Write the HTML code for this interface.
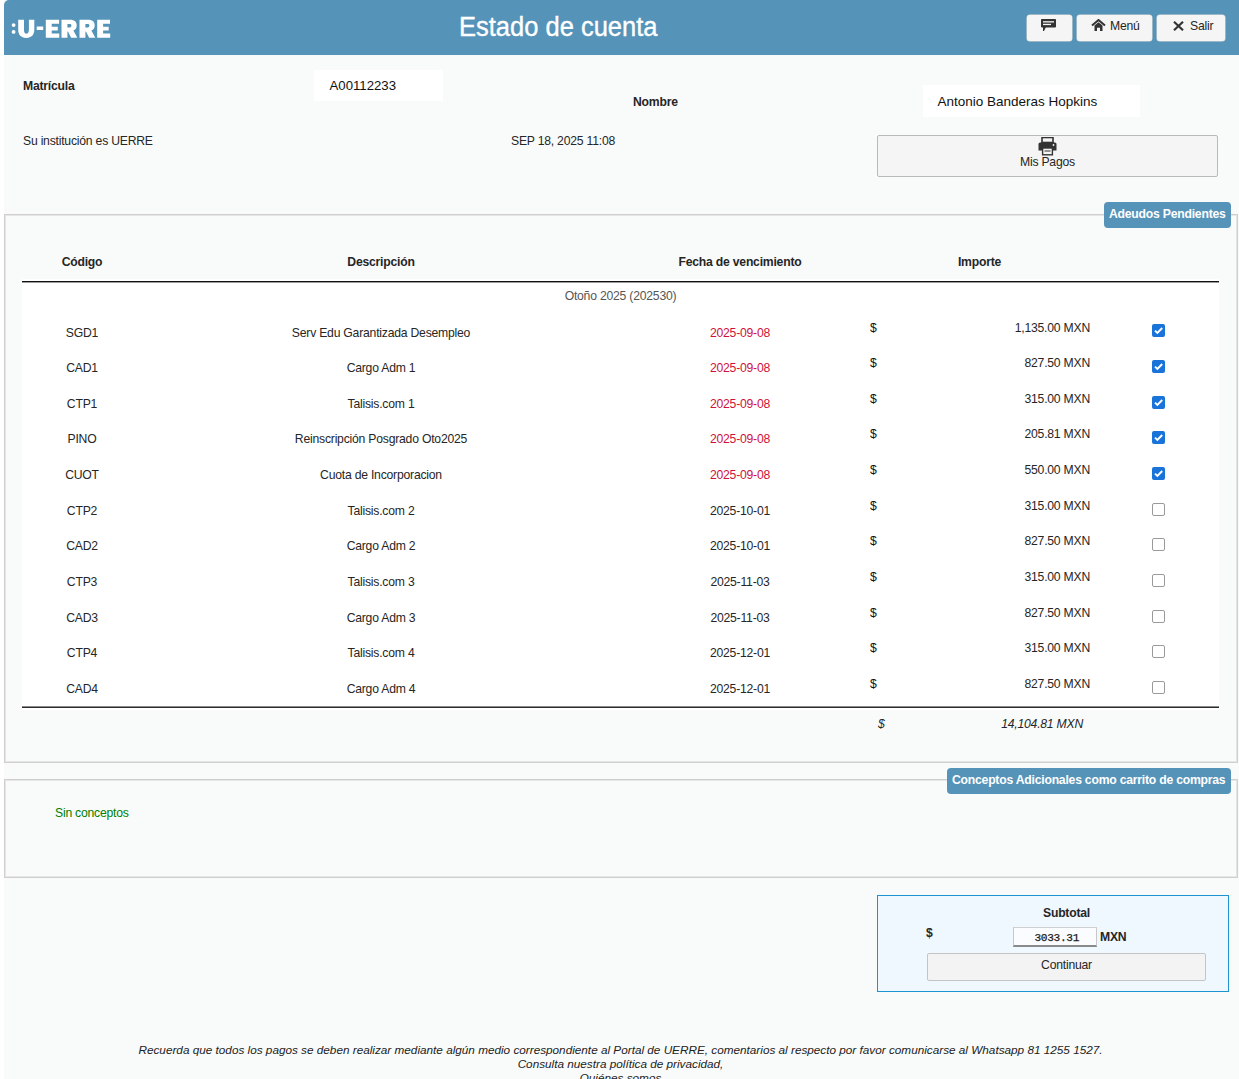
<!DOCTYPE html>
<html lang="es">
<head>
<meta charset="utf-8">
<title>Estado de cuenta</title>
<style>
html,body{margin:0;padding:0;background:#fff;}
body{width:1239px;height:1079px;overflow:hidden;position:relative;font-family:"Liberation Sans",sans-serif;color:#262626;font-size:12px;}
#page{position:absolute;left:4px;top:0;width:1235px;height:1079px;background:#f9fbfb;}
.a{position:absolute;white-space:nowrap;line-height:12px;font-size:12.2px;letter-spacing:-0.22px;}
.b{font-weight:bold;}
.c{text-align:center;}
.r{text-align:right;}
#hdr{position:absolute;left:4px;top:0;width:1235px;height:55px;background:#5593b9;border-top-left-radius:5px;}
.hbtn{position:absolute;top:15px;height:26px;background:#f5f5f5;border-radius:3px;box-shadow:0 0 0 0.5px #e4dcd8;}
.fs{position:absolute;left:4px;width:1230px;border:1px solid #cfcfcf;padding:1px;box-shadow:inset 0 0 0 1px #e6e6e6;}
.lg{position:absolute;height:26px;background:#5593b9;border-radius:4px;color:#fff;font-weight:bold;}
.cb{position:absolute;width:13px;height:13px;box-sizing:border-box;border-radius:2px;}
.cb.on{background:#1a73d9;}
.cb.off{border:1px solid #9a9a9a;background:#fff;}
.red{color:#d0103a;}
</style>
</head>
<body>
<div id="page"></div>
<div id="hdr"></div>
<!-- logo -->
<svg style="position:absolute;left:0;top:0" width="130" height="54">
  <circle cx="13.6" cy="25.1" r="1.9" fill="#fff"/>
  <circle cx="13.6" cy="31.9" r="1.9" fill="#fff"/>
  <path fill="#fff" fill-rule="evenodd" d="M18.2,19.7 H24 V29.8 C24,32.3 24.8,33.7 26.3,33.7 C27.8,33.7 28.9,32.3 28.9,29.8 V19.7 H34.3 V29.6 C34.3,35 31.6,37.9 26.2,37.9 C20.9,37.9 18.2,35 18.2,29.6 Z M36.7,26.6 H43.2 V30 H36.7 Z M45.8,19.7 H59.099999999999994 V23.8 H51.699999999999996 V26.7 H57.8 V30.6 H51.699999999999996 V33.6 H59.3 V37.8 H45.8 Z M61.5,19.7 H70.1 C74.9,19.7 76.7,22.1 76.7,25.4 C76.7,28.0 75.5,29.7 73.4,30.6 L77.3,37.8 H71.1 L68.0,31.4 H67.4 V37.8 H61.5 Z M67.4,23.9 V27.4 H69.7 C71.0,27.4 71.4,26.7 71.4,25.6 C71.4,24.5 70.9,23.9 69.7,23.9 Z M79.5,19.7 H88.1 C92.9,19.7 94.7,22.1 94.7,25.4 C94.7,28.0 93.5,29.7 91.4,30.6 L95.3,37.8 H89.1 L86.0,31.4 H85.4 V37.8 H79.5 Z M85.4,23.9 V27.4 H87.7 C89.0,27.4 89.4,26.7 89.4,25.6 C89.4,24.5 88.9,23.9 87.7,23.9 Z M97.2,19.7 H110.0 V23.8 H103.10000000000001 V26.7 H108.7 V30.6 H103.10000000000001 V33.6 H110.2 V37.8 H97.2 Z"/>
</svg>
<div class="a" style="left:459px;top:14.4px;font-size:25.5px;letter-spacing:0;line-height:26px;color:#fff;transform:scale(1,1.09);transform-origin:0 22px;-webkit-text-stroke:0.35px #fff;">Estado de cuenta</div>

<div class="hbtn" style="left:1027px;width:45px;">
  <svg style="position:absolute;left:14px;top:4px" width="16" height="13" viewBox="0 0 16 13">
    <path d="M0.5 0.5 H14.5 V8 H4.5 L2.5 12 L2.5 8 H0.5 Z" fill="#333" stroke="#333" stroke-width="1" stroke-linejoin="round"/>
    <rect x="2" y="2.2" width="11" height="1.3" fill="#f5f5f5"/>
    <rect x="2" y="4.8" width="8" height="1.3" fill="#f5f5f5"/>
  </svg>
</div>
<div class="hbtn" style="left:1077px;width:75px;">
  <svg style="position:absolute;left:14px;top:4px" width="16" height="13" viewBox="0 0 16 13">
    <path d="M1 6.5 L7.5 1 L14 6.5" fill="none" stroke="#333" stroke-width="2"/>
    <path d="M3.5 6.5 L7.5 3.3 L11.5 6.5 V12 H9 V8.7 H6 V12 H3.5 Z" fill="#333"/>
  </svg>
  <div class="a" style="left:33px;top:5px;">Menú</div>
</div>
<div class="hbtn" style="left:1157px;width:68px;">
  <svg style="position:absolute;left:16px;top:5.5px" width="11" height="10" viewBox="0 0 11 10">
    <path d="M1 0.8 L10 9.2 M10 0.8 L1 9.2" stroke="#333" stroke-width="2.2"/>
  </svg>
  <div class="a" style="left:33px;top:5px;">Salir</div>
</div>

<!-- info -->
<div class="a b" style="left:23px;top:80px;">Matrícula</div>
<div style="position:absolute;left:314px;top:70px;width:129px;height:31px;background:#fff;"></div>
<div class="a" style="left:329.5px;top:79px;font-size:13.2px;letter-spacing:0;line-height:13px;color:#111;">A00112233</div>
<div class="a b" style="left:633px;top:96px;">Nombre</div>
<div style="position:absolute;left:923px;top:85px;width:217px;height:32px;background:#fff;"></div>
<div class="a" style="left:937.5px;top:95px;font-size:13.5px;letter-spacing:0;line-height:13px;color:#111;">Antonio Banderas Hopkins</div>
<div class="a" style="left:23px;top:135px;">Su institución es UERRE</div>
<div class="a" style="left:511px;top:135px;">SEP 18, 2025 11:08</div>
<div style="position:absolute;left:877px;top:135px;width:339px;height:40px;background:#f5f5f5;border:1px solid #b9b9b9;border-radius:2px;">
  <svg style="position:absolute;left:160px;top:1px" width="19" height="19" viewBox="0 0 19 19">
    <rect x="4" y="0.5" width="11" height="5" fill="none" stroke="#333" stroke-width="1.6"/>
    <path d="M0.5 7 Q0.5 5.5 2 5.5 H17 Q18.5 5.5 18.5 7 V13.5 H15 V11 H4 V13.5 H0.5 Z" fill="#333"/>
    <rect x="4.6" y="11" width="9.8" height="6.8" fill="none" stroke="#333" stroke-width="1.4"/>
    <rect x="6.5" y="13.5" width="6" height="1" fill="#333"/>
    <circle cx="15.5" cy="8" r="0.9" fill="#f5f5f5"/>
  </svg>
  <div class="a" style="left:142px;top:20px;">Mis Pagos</div>
</div>

<!-- fieldset 1 -->
<div class="fs" style="top:214px;height:545px;"></div>
<div class="lg" style="left:1104px;top:202px;width:127px;"><div class="a" style="left:5px;top:6px;">Adeudos Pendientes</div></div>

<!-- table -->
<div style="position:absolute;left:22px;top:279px;width:1197px;height:431px;background:#fff;"></div>
<div style="position:absolute;left:22px;top:281px;width:1197px;height:1px;background:#111;"></div>
<div style="position:absolute;left:22px;top:282px;width:1197px;height:1px;background:#9a9a9a;"></div>
<div style="position:absolute;left:22px;top:706px;width:1197px;height:1px;background:#8a8a8a;"></div>
<div style="position:absolute;left:22px;top:707px;width:1197px;height:1px;background:#2a2d2d;"></div>
<div id="thead">
  <div class="a b c" style="left:22px;width:120px;top:256px;">Código</div>
  <div class="a b c" style="left:142px;width:478px;top:256px;">Descripción</div>
  <div class="a b c" style="left:620px;width:240px;top:256px;">Fecha de vencimiento</div>
  <div class="a b c" style="left:860px;width:239px;top:256px;">Importe</div>
</div>
<div class="a c" style="left:22px;width:1197px;top:290px;color:#555;">Otoño 2025 (202530)</div>
<!--ROWS-->
<div class="a c" style="left:22px;width:120px;top:326.50px;">SGD1</div>
<div class="a c" style="left:142px;width:478px;top:326.50px;">Serv Edu Garantizada Desempleo</div>
<div class="a c red" style="left:620px;width:240px;top:326.50px;">2025-09-08</div>
<div class="a" style="left:870px;top:321.50px;color:#111;">$</div>
<div class="a r" style="left:900px;width:190px;top:321.50px;">1,135.00 MXN</div>
<div class="cb on" style="left:1152.3px;top:324.40px;"><svg width="13" height="13" viewBox="0 0 13 13" style="position:absolute;left:0;top:0"><path d="M3 6.6 L5.4 9 L10.2 4" fill="none" stroke="#fff" stroke-width="1.9"/></svg></div>
<div class="a c" style="left:22px;width:120px;top:362.15px;">CAD1</div>
<div class="a c" style="left:142px;width:478px;top:362.15px;">Cargo Adm 1</div>
<div class="a c red" style="left:620px;width:240px;top:362.15px;">2025-09-08</div>
<div class="a" style="left:870px;top:357.15px;color:#111;">$</div>
<div class="a r" style="left:900px;width:190px;top:357.15px;">827.50 MXN</div>
<div class="cb on" style="left:1152.3px;top:360.05px;"><svg width="13" height="13" viewBox="0 0 13 13" style="position:absolute;left:0;top:0"><path d="M3 6.6 L5.4 9 L10.2 4" fill="none" stroke="#fff" stroke-width="1.9"/></svg></div>
<div class="a c" style="left:22px;width:120px;top:397.80px;">CTP1</div>
<div class="a c" style="left:142px;width:478px;top:397.80px;">Talisis.com 1</div>
<div class="a c red" style="left:620px;width:240px;top:397.80px;">2025-09-08</div>
<div class="a" style="left:870px;top:392.80px;color:#111;">$</div>
<div class="a r" style="left:900px;width:190px;top:392.80px;">315.00 MXN</div>
<div class="cb on" style="left:1152.3px;top:395.70px;"><svg width="13" height="13" viewBox="0 0 13 13" style="position:absolute;left:0;top:0"><path d="M3 6.6 L5.4 9 L10.2 4" fill="none" stroke="#fff" stroke-width="1.9"/></svg></div>
<div class="a c" style="left:22px;width:120px;top:433.45px;">PINO</div>
<div class="a c" style="left:142px;width:478px;top:433.45px;">Reinscripción Posgrado Oto2025</div>
<div class="a c red" style="left:620px;width:240px;top:433.45px;">2025-09-08</div>
<div class="a" style="left:870px;top:428.45px;color:#111;">$</div>
<div class="a r" style="left:900px;width:190px;top:428.45px;">205.81 MXN</div>
<div class="cb on" style="left:1152.3px;top:431.35px;"><svg width="13" height="13" viewBox="0 0 13 13" style="position:absolute;left:0;top:0"><path d="M3 6.6 L5.4 9 L10.2 4" fill="none" stroke="#fff" stroke-width="1.9"/></svg></div>
<div class="a c" style="left:22px;width:120px;top:469.10px;">CUOT</div>
<div class="a c" style="left:142px;width:478px;top:469.10px;">Cuota de Incorporacion</div>
<div class="a c red" style="left:620px;width:240px;top:469.10px;">2025-09-08</div>
<div class="a" style="left:870px;top:464.10px;color:#111;">$</div>
<div class="a r" style="left:900px;width:190px;top:464.10px;">550.00 MXN</div>
<div class="cb on" style="left:1152.3px;top:467.00px;"><svg width="13" height="13" viewBox="0 0 13 13" style="position:absolute;left:0;top:0"><path d="M3 6.6 L5.4 9 L10.2 4" fill="none" stroke="#fff" stroke-width="1.9"/></svg></div>
<div class="a c" style="left:22px;width:120px;top:504.75px;">CTP2</div>
<div class="a c" style="left:142px;width:478px;top:504.75px;">Talisis.com 2</div>
<div class="a c" style="left:620px;width:240px;top:504.75px;">2025-10-01</div>
<div class="a" style="left:870px;top:499.75px;color:#111;">$</div>
<div class="a r" style="left:900px;width:190px;top:499.75px;">315.00 MXN</div>
<div class="cb off" style="left:1152.3px;top:502.65px;"></div>
<div class="a c" style="left:22px;width:120px;top:540.40px;">CAD2</div>
<div class="a c" style="left:142px;width:478px;top:540.40px;">Cargo Adm 2</div>
<div class="a c" style="left:620px;width:240px;top:540.40px;">2025-10-01</div>
<div class="a" style="left:870px;top:535.40px;color:#111;">$</div>
<div class="a r" style="left:900px;width:190px;top:535.40px;">827.50 MXN</div>
<div class="cb off" style="left:1152.3px;top:538.30px;"></div>
<div class="a c" style="left:22px;width:120px;top:576.05px;">CTP3</div>
<div class="a c" style="left:142px;width:478px;top:576.05px;">Talisis.com 3</div>
<div class="a c" style="left:620px;width:240px;top:576.05px;">2025-11-03</div>
<div class="a" style="left:870px;top:571.05px;color:#111;">$</div>
<div class="a r" style="left:900px;width:190px;top:571.05px;">315.00 MXN</div>
<div class="cb off" style="left:1152.3px;top:573.95px;"></div>
<div class="a c" style="left:22px;width:120px;top:611.70px;">CAD3</div>
<div class="a c" style="left:142px;width:478px;top:611.70px;">Cargo Adm 3</div>
<div class="a c" style="left:620px;width:240px;top:611.70px;">2025-11-03</div>
<div class="a" style="left:870px;top:606.70px;color:#111;">$</div>
<div class="a r" style="left:900px;width:190px;top:606.70px;">827.50 MXN</div>
<div class="cb off" style="left:1152.3px;top:609.60px;"></div>
<div class="a c" style="left:22px;width:120px;top:647.35px;">CTP4</div>
<div class="a c" style="left:142px;width:478px;top:647.35px;">Talisis.com 4</div>
<div class="a c" style="left:620px;width:240px;top:647.35px;">2025-12-01</div>
<div class="a" style="left:870px;top:642.35px;color:#111;">$</div>
<div class="a r" style="left:900px;width:190px;top:642.35px;">315.00 MXN</div>
<div class="cb off" style="left:1152.3px;top:645.25px;"></div>
<div class="a c" style="left:22px;width:120px;top:683.00px;">CAD4</div>
<div class="a c" style="left:142px;width:478px;top:683.00px;">Cargo Adm 4</div>
<div class="a c" style="left:620px;width:240px;top:683.00px;">2025-12-01</div>
<div class="a" style="left:870px;top:678.00px;color:#111;">$</div>
<div class="a r" style="left:900px;width:190px;top:678.00px;">827.50 MXN</div>
<div class="cb off" style="left:1152.3px;top:680.90px;"></div>
<!--/ROWS-->

<div class="a" style="left:878px;top:718px;font-style:italic;">$</div>
<div class="a r" style="left:900px;width:183px;top:718px;font-style:italic;">14,104.81 MXN</div>

<!-- fieldset 2 -->
<div class="fs" style="top:779px;height:95px;"></div>
<div class="lg" style="left:947px;top:768px;width:284px;"><div class="a" style="left:5px;top:5.5px;">Conceptos Adicionales como carrito de compras</div></div>
<div class="a" style="left:55px;top:807px;color:#008000;">Sin conceptos</div>

<!-- subtotal -->
<div style="position:absolute;left:877px;top:895px;width:350px;height:95px;background:#f0f8ff;border:1px solid #1c94d2;"></div>
<div class="a b c" style="left:927px;width:279px;top:907px;">Subtotal</div>
<div class="a b" style="left:926px;top:927px;">$</div>
<div style="position:absolute;left:1013px;top:927px;width:84px;height:20px;box-sizing:border-box;background:#fafcff;border-style:solid;border-width:1px 1px 2px 1px;border-color:#d0d0d0 #c8c8c8 #8a8a8a #c8c8c8;"></div>
<div class="a" style="left:1034.5px;top:932.3px;font-family:'Liberation Mono',monospace;font-size:11.2px;letter-spacing:-0.35px;line-height:12px;color:#1a1a1a;-webkit-text-stroke:0.25px #1a1a1a;">3033.31</div>
<div class="a b" style="left:1100px;top:931px;">MXN</div>
<div style="position:absolute;left:927px;top:953px;width:277px;height:26px;background:#f3f3f3;border:1px solid #c4c4c4;border-radius:2px;"></div>
<div class="a c" style="left:927px;width:279px;top:959px;">Continuar</div>

<!-- footer -->
<div class="a c" style="left:0;width:1241px;top:1043.4px;font-size:11.75px;letter-spacing:0;font-style:italic;line-height:14px;color:#222;">Recuerda que todos los pagos se deben realizar mediante algún medio correspondiente al Portal de UERRE, comentarios al respecto por favor comunicarse al Whatsapp 81 1255 1527.<br>Consulta nuestra política de privacidad,<br>Quiénes somos</div>
</body>
</html>
